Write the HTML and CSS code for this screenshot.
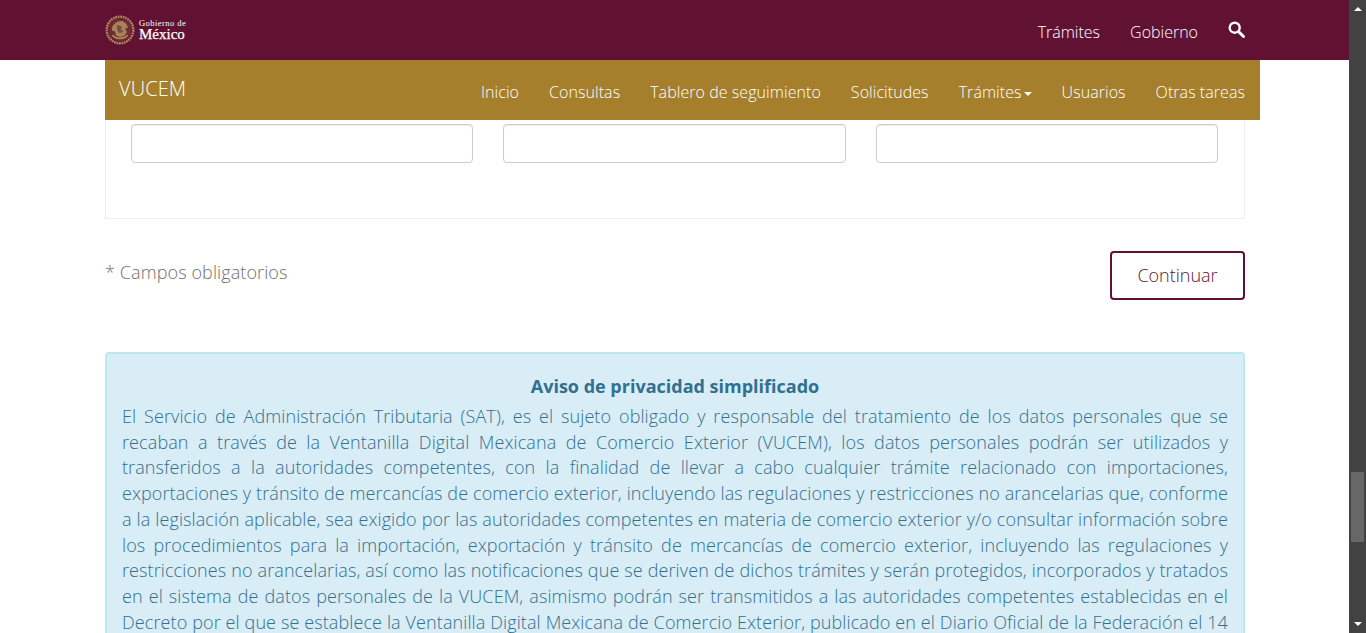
FILE: index.html
```html
<!DOCTYPE html>
<html lang="es">
<head>
<meta charset="utf-8">
<title>VUCEM</title>
<link rel="stylesheet" href="styles.css">
</head>
<body>
<div class="viewport">
  <div class="page">
    <header class="gob">
      <div class="wrap gob-inner">
        <a class="logo" href="#">
          <svg class="emblem" width="30" height="30" viewBox="0 0 30 30" aria-hidden="true">
            <circle cx="15" cy="15" r="13.300" fill="none" stroke="#b08a5c" stroke-width="2.400" stroke-dasharray="1.800 .7"/>
            <circle cx="15" cy="15" r="11.500" fill="#6f2c36"/>
            <path d="M7 13c1-4 5-7 9-7 4 .5 6 3 7 7l-3 .5 2 3.500-3 4-4 1-4-1.500-1-4-3-1z" fill="#a8835a"/>
            <path d="M7.500 20c3 4.500 12 4.500 15 0" fill="none" stroke="#b08a5c" stroke-width="1.600"/>
            <path d="M12 10l5 1.500-1 3 3 2.500-5 1-2-3.500z" fill="#7d4c42"/>
          </svg>
          <span class="logo-text"><span class="logo-small">Gobierno de</span><span class="logo-big">México</span></span>
        </a>
        <nav class="gob-links">
          <a href="#">Trámites</a>
          <a href="#">Gobierno</a>
          <a href="#" class="search" aria-label="Buscar">
            <svg width="17" height="17" viewBox="0 0 17 17"><circle cx="6.700" cy="6.700" r="5" fill="none" stroke="#fff" stroke-width="2.400"/><path d="M10.500 10.500l5 5" stroke="#fff" stroke-width="3" stroke-linecap="round"/></svg>
          </a>
        </nav>
      </div>
    </header>
    <div class="wrap-nav">
      <nav class="subnav">
        <a class="brand" href="#">VUCEM</a>
        <div class="subnav-links">
          <a href="#">Inicio</a>
          <a href="#">Consultas</a>
          <a href="#">Tablero de seguimiento</a>
          <a href="#">Solicitudes</a>
          <a href="#">Trámites<span class="caret"></span></a>
          <a href="#">Usuarios</a>
          <a href="#">Otras tareas</a>
        </div>
      </nav>
    </div>
    <main class="wrap">
      <section class="panel">
        <input class="field" type="text">
        <input class="field" type="text">
        <input class="field" type="text">
      </section>
      <div class="actions">
        <span class="required">* Campos obligatorios</span>
        <button class="btn" type="button">Continuar</button>
      </div>
      <section class="notice">
        <h2>Aviso de privacidad simplificado</h2>
        <p>El Servicio de Administración Tributaria (SAT), es el sujeto obligado y responsable del tratamiento de los datos personales que se recaban a través de la Ventanilla Digital Mexicana de Comercio Exterior (VUCEM), los datos personales podrán ser utilizados y transferidos a la autoridades competentes, con la finalidad de llevar a cabo cualquier trámite relacionado con importaciones, exportaciones y tránsito de mercancías de comercio exterior, incluyendo las regulaciones y restricciones no arancelarias que, conforme a la legislación aplicable, sea exigido por las autoridades competentes en materia de comercio exterior y/o consultar información sobre los procedimientos para la importación, exportación y tránsito de mercancías de comercio exterior, incluyendo las regulaciones y restricciones no arancelarias, así como las notificaciones que se deriven de dichos trámites y serán protegidos, incorporados y tratados en el sistema de datos personales de la VUCEM, asimismo podrán ser transmitidos a las autoridades competentes establecidas en el Decreto por el que se establece la Ventanilla Digital Mexicana de Comercio Exterior, publicado en el Diario Oficial de la Federación el 14 de enero de 2011.</p>
      </section>
    </main>
  </div>
  <div class="scrollbar">
    <span class="arrow-up"></span>
    <div class="track"><span class="thumb"></span></div>
    <span class="arrow-down"></span>
  </div>
</div>
</body>
</html>
```
FILE: styles.css
```css
* { box-sizing: border-box; }
html, body { margin: 0; height: 100%; overflow: hidden; }
body { font-family: "Open Sans", sans-serif; font-size: 16px; font-weight: 300; color: #555; background: #fff; }
a { color: inherit; text-decoration: none; }

.viewport { display: flex; height: 633px; }
.page { flex: 1; min-width: 0; height: 633px; overflow: hidden; }

.wrap { width: 1140px; margin-left: 105px; }

.gob { height: 60px; background: #611232; color: #fff; }
.gob-inner { height: 60px; display: flex; align-items: center; justify-content: space-between; }
.logo { display: flex; align-items: center; gap: 4px; margin-top: -1px; }
.emblem { display: block; }
.logo-text { display: flex; flex-direction: column; font-family: "Liberation Serif", serif; color: #fff; font-weight: 400; }
.logo-small { font-size: 8.500px; line-height: 9px; letter-spacing: .45px; }
.logo-big { font-size: 15px; line-height: 13px; -webkit-text-stroke: .25px #fff; }
.gob-links { display: flex; align-items: center; gap: 30px; font-size: 16px; }
.gob-links a { display: block; line-height: 24px; margin-top: 4px; }
.gob-links .search { margin-top: -2px; line-height: 0; }

.wrap-nav { margin-left: 105px; width: 1155px; }
.subnav { height: 60px; background: #a57f2c; color: #fff; display: flex; justify-content: space-between; padding: 0 15px 0 14px; }
.brand { font-size: 20px; line-height: 58px; letter-spacing: .1px; }
.subnav-links { display: flex; gap: 30px; font-size: 16px; line-height: 64px; letter-spacing: .06px; }
.caret { display: inline-block; margin-left: 2px; vertical-align: middle; border-top: 4px solid #fff; border-left: 4px solid transparent; border-right: 4px solid transparent; }

.panel { height: 99px; border: 1px solid #eee; border-top: 0; padding: 4px 26px 0 25px; display: grid; grid-template-columns: repeat(3, 1fr); column-gap: 30px; align-items: start; background: #fff; }
.field { display: block; width: 100%; height: 39px; border: 1px solid #ccc; border-radius: 4px; background: #fff; box-shadow: inset 0 1px 1px rgba(0,0,0,.075); }

.actions { display: flex; justify-content: space-between; align-items: flex-start; margin-top: 32px; }
.required { color: #6f6f6f; font-size: 18px; line-height: 24px; margin-top: 9px; letter-spacing: .1px; }
.btn { width: 135px; height: 49px; border: 2px solid #611232; border-radius: 4px; background: #fff; color: #611232; font-family: "Open Sans", sans-serif; font-size: 18px; font-weight: 300; padding: 0 0 1px; }

.notice { margin-top: 52px; background: #d9edf7; border: 2px solid #bce8f1; border-radius: 4px; padding: 20px 15px 0; color: #31708f; }
.notice h2 { margin: 0; text-align: center; font-size: 18px; font-weight: 700; line-height: 24px; }
.notice p { margin: 6px 0 0; font-size: 18px; line-height: 25.700px; text-align: justify; letter-spacing: .1px; }

.scrollbar { width: 17px; height: 633px; background: #424242; display: flex; flex-direction: column; align-items: center; flex: none; }
.arrow-up, .arrow-down { display: block; width: 0; height: 0; border-left: 4px solid transparent; border-right: 4px solid transparent; flex: none; }
.arrow-up { border-bottom: 4px solid #fff; margin-top: 7px; }
.arrow-down { border-top: 4px solid #fff; margin-bottom: 7px; }
.track { flex: 1; width: 13px; padding-top: 461px; }
.thumb { display: block; width: 13px; height: 70px; background: #686868; }
```
